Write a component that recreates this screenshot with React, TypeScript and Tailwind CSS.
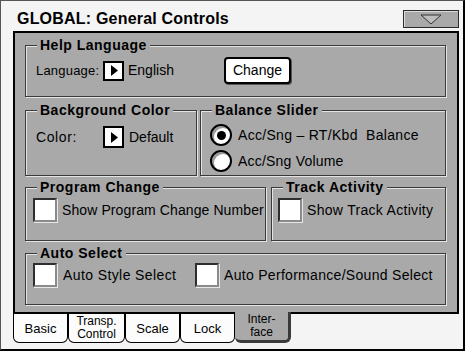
import type { ReactNode } from "react";

const font = { fontFamily: '"Liberation Sans", Arial, sans-serif' };

function cx(...parts: (string | false | undefined)[]) {
  return parts.filter(Boolean).join(" ");
}

function Group({ title, className, children }: { title: string; className?: string; children?: ReactNode }) {
  return (
    <div className={cx("flex flex-col border border-[#3a3a3a] shadow-[inset_1px_1px_0_#e4e4e4,1px_1px_0_#e4e4e4]", className)}>
      <div className="-mt-[10px] ml-[11px] w-fit whitespace-nowrap bg-[#a9a9a9] px-[3px] text-[14px] font-bold leading-[18px] tracking-[0.5px] text-black">
        {title}
      </div>
      {children}
    </div>
  );
}

function ArrowBox({ className }: { className?: string }) {
  return (
    <span className={cx("flex w-[21px] shrink-0 items-center justify-center border-2 border-black bg-white", className)}>
      <svg width="8" height="11" viewBox="0 0 8 11">
        <path d="M1 0 L8 5.5 L1 11 Z" fill="#000" />
      </svg>
    </span>
  );
}

function CheckBox() {
  return (
    <span className="block h-[24px] w-[24px] shrink-0 border-2 border-t-[#2e2e2e] border-l-[#2e2e2e] border-r-[#8a8a8a] border-b-[#8a8a8a] bg-white shadow-[1px_1px_0_#e8e8e8]" />
  );
}

function Radio({ on }: { on?: boolean }) {
  return (
    <span className="flex h-[22px] w-[22px] shrink-0 items-center justify-center rounded-full border-2 border-black bg-white shadow-[inset_2px_2px_0_#9a9a9a]">
      {on ? <span className="block h-[9px] w-[9px] rounded-full bg-black" /> : null}
    </span>
  );
}

function Tab({ label, w, selected, small }: { label: ReactNode; w: string; selected?: boolean; small?: boolean }) {
  const size = small ? "text-[12px] leading-[13px]" : "text-[13px] leading-[15px]";
  if (selected) {
    return (
      <div className={cx("flex h-[31px] flex-col items-center justify-center rounded-b-[6px] border-r-[3px] border-b-[3px] border-[#3a3a3a] bg-[#a9a9a9]", size, w)}>
        {label}
      </div>
    );
  }
  return (
    <div className={cx("flex h-[31px] flex-col items-center justify-center rounded-b-[6px] border-x border-b border-t-2 border-black bg-[#fcfcfc]", size, w)}>
      {label}
    </div>
  );
}

export default function App() {
  return (
    <div className="h-[353px] w-[467px] bg-white text-black" style={font}>
      <div className="flex h-[351px] w-[465px] flex-col border-l border-t border-r-2 border-b-2 border-l-[#555] border-t-[#555] border-r-black border-b-black bg-[#f4f4f4]">
        <div className="flex h-[30px] items-end justify-between pb-[3px] pl-[16px] pr-[4px]">
          <span className="text-[16px] font-bold leading-[18px] tracking-[0.2px]">GLOBAL: General Controls</span>
          <span className="flex h-[18px] w-[56px] items-center justify-center border border-[#2a2a2a] bg-[#a9a9a9] shadow-[inset_1px_1px_0_#dcdcdc]">
            <svg width="22" height="11" viewBox="0 0 22 11">
              <path d="M1 1 L21 1 L11 10 Z" fill="#bdbdbd" stroke="#333" strokeWidth="1" />
            </svg>
          </span>
        </div>

        <div className="ml-[12px] flex h-[281px] w-[446px] flex-col border-x-2 border-t-2 border-black bg-[#a9a9a9] pl-[10px] pr-[11px] pt-[12px]">
          <Group title="Help Language" className="h-[52px]">
            <div className="flex items-center whitespace-nowrap pl-[10px] pt-[3px]">
              <span className="w-[67px] text-[13px] tracking-[0.2px]">Language:</span>
              <ArrowBox className="h-[20px]" />
              <span className="ml-[4px] w-[96px] text-[14px]">English</span>
              <span className="flex h-[27px] w-[67px] items-center justify-center rounded-[4px] border-2 border-black bg-white text-[14px] shadow-[1px_1px_0_#555]">
                Change
              </span>
            </div>
          </Group>

          <div className="mt-[13px] flex h-[66px] gap-[3px]">
            <Group title="Background Color" className="w-[172px]">
              <div className="flex items-center whitespace-nowrap pl-[10px] pt-[7px]">
                <span className="w-[67px] text-[14px] tracking-[0.6px]">Color:</span>
                <ArrowBox className="h-[22px]" />
                <span className="ml-[5px] text-[14px]">Default</span>
              </div>
            </Group>
            <Group title="Balance Slider" className="flex-1">
              <div className="flex flex-col gap-[4px] whitespace-nowrap pl-[9px] pt-[5px]">
                <div className="flex items-center gap-[6px]">
                  <Radio on />
                  <span className="text-[14px] tracking-[0.3px]">Acc/Sng – RT/Kbd&nbsp; Balance</span>
                </div>
                <div className="flex items-center gap-[6px]">
                  <Radio />
                  <span className="text-[14px] tracking-[0.2px]">Acc/Sng Volume</span>
                </div>
              </div>
            </Group>
          </div>

          <div className="mt-[11px] flex h-[54px] gap-[5px]">
            <Group title="Program Change" className="w-[241px]">
              <div className="flex items-center gap-[5px] whitespace-nowrap pl-[7px] pt-[2px]">
                <CheckBox />
                <span className="text-[14px] tracking-[0.1px]">Show Program Change Number</span>
              </div>
            </Group>
            <Group title="Track Activity" className="flex-1">
              <div className="flex items-center gap-[5px] whitespace-nowrap pl-[6px] pt-[2px]">
                <CheckBox />
                <span className="text-[14px] tracking-[0.3px]">Show Track Activity</span>
              </div>
            </Group>
          </div>

          <Group title="Auto Select" className="mt-[12px] h-[52px]">
            <div className="flex items-center whitespace-nowrap pl-[7px] pt-[1px]">
              <CheckBox />
              <span className="ml-[6px] w-[132px] text-[14px] tracking-[0.4px]">Auto Style Select</span>
              <CheckBox />
              <span className="ml-[5px] text-[14px] tracking-[0.3px]">Auto Performance/Sound Select</span>
            </div>
          </Group>
        </div>

        <div className="ml-[12px] flex w-[446px]">
          <Tab label="Basic" w="w-[55px]" />
          <Tab
            label={
              <>
                <span>Transp.</span>
                <span>Control</span>
              </>
            }
            w="w-[57px]"
            small
          />
          <Tab label="Scale" w="w-[55px]" />
          <Tab label="Lock" w="w-[55px]" />
          <Tab
            label={
              <>
                <span>Inter-</span>
                <span>face</span>
              </>
            }
            w="w-[56px]"
            selected
            small
          />
          <div className="h-[31px] flex-1 border-t-2 border-black" />
        </div>
      </div>
    </div>
  );
}
